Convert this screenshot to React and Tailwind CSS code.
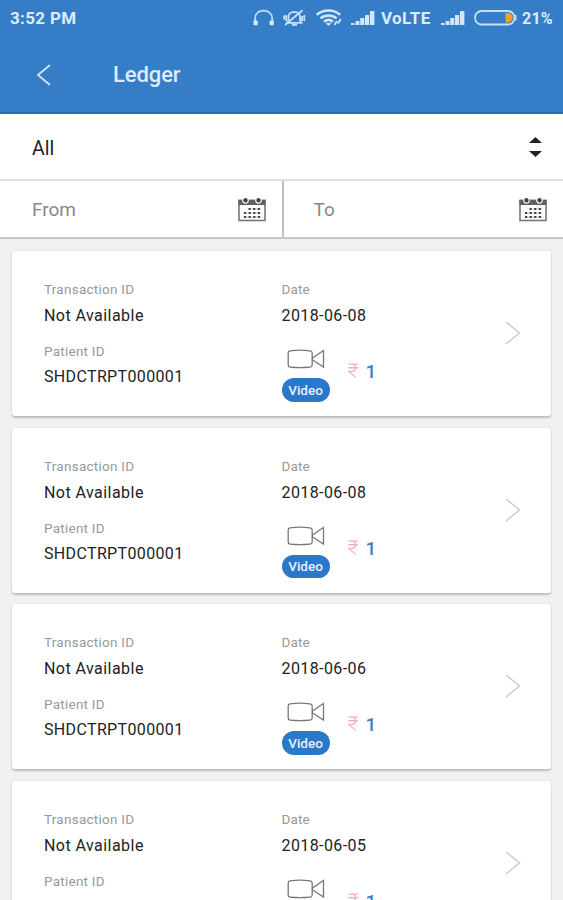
const ledger = [
  { id: 1, date: "2018-06-08" },
  { id: 2, date: "2018-06-08" },
  { id: 3, date: "2018-06-06" },
  { id: 4, date: "2018-06-05" },
];

function SignalIcon({ className }) {
  return (
    <svg className={className} width="24" height="16" viewBox="0 0 24 16" fill="#d3e6fa">
      <rect x="0" y="13" width="3.6" height="2" />
      <rect x="4.6" y="11" width="3.9" height="4" />
      <rect x="9.2" y="8" width="4.1" height="7" />
      <rect x="14" y="5" width="4.2" height="10" />
      <rect x="19" y="1" width="4.4" height="14" />
    </svg>
  );
}

function StatusBar() {
  return (
    <div className="flex h-9 items-center pl-[10px] text-[17px] font-bold text-[#dcecfd]">
      <span className="w-[243px] pt-px tracking-[0.35px]">3:52 PM</span>
      <svg className="shrink-0" width="23" height="18" viewBox="0 0 24 18" fill="none">
        <path d="M2.2 14V9.5C2.2 4.5 6 1.2 11 1.2s9 3.3 9 8.3V14" stroke="#bfdbf7" strokeWidth="1.8" />
        <rect x="0.5" y="11.5" width="4.4" height="5" rx="1" fill="#d8eafc" />
        <rect x="17.3" y="11.5" width="4.4" height="5" rx="1" fill="#d8eafc" />
      </svg>
      <svg className="ml-[7px] shrink-0" width="23" height="18" viewBox="0 0 23 18" fill="none" stroke="#c6dff8" strokeWidth="1.8">
        <path d="M5.5 11.5V7.5C5.5 5 8 3 11.3 3c3.3 0 5.7 2 5.7 4.5v4l1.4 2.3H4.1z" />
        <path d="M2 16L19.5 1.2" />
        <path d="M9 15.8h5" strokeWidth="2" />
        <path d="M1.2 6.5v4M21.3 6v6M19 7v5M3.2 6v6" strokeWidth="1.8" />
      </svg>
      <svg className="ml-[10px] shrink-0" width="27" height="18" viewBox="0 0 27 18" fill="none" stroke="#d0e5fa" strokeWidth="2.5">
        <path d="M0.8 5.8c6.5-5.8 17-5.8 23.4 0" />
        <path d="M4.4 9.4c4.6-4 11.6-4 16.2 0" />
        <path d="M8 12.8c2.7-2.3 6.3-2.3 9 0" />
        <path d="M10 14.2h5l-2.5 2.6z" fill="#d0e5fa" strokeWidth="0.6" />
        <path d="M18.5 16l2.5-4M22 14.5l2.8-4.5" strokeWidth="1.8" />
      </svg>
      <SignalIcon className="ml-[8px] shrink-0" />
      <span className="ml-[6px] w-[53px] whitespace-nowrap pt-px tracking-[0.4px]">VoLTE</span>
      <SignalIcon className="ml-[7px] shrink-0" />
      <svg className="ml-[9px] shrink-0" width="43" height="16" viewBox="0 0 43 16" fill="none">
        <rect x="1" y="1" width="39.5" height="13.5" rx="6.7" stroke="#c6dff8" strokeWidth="1.8" />
        <path d="M31.5 3h2.5a4.7 4.7 0 0 1 0 9.4H31.5z" fill="#f5a01e" />
        <path d="M41.8 5v5.5" stroke="#c6dff8" strokeWidth="1.4" />
      </svg>
      <span className="ml-[5px] pt-px text-[16px] tracking-[0.2px]">21%</span>
    </div>
  );
}

function CalendarIcon() {
  return (
    <svg width="28" height="25" viewBox="0 0 28 25" fill="none">
      <rect x="1" y="3.5" width="26" height="20" stroke="#777" strokeWidth="1.6" />
      <rect x="0.5" y="2.8" width="27" height="5.2" fill="#606060" />
      <circle cx="7.5" cy="3.3" r="2.8" fill="#444" stroke="#fff" strokeWidth="1.1" />
      <circle cx="20.5" cy="3.3" r="2.8" fill="#444" stroke="#fff" strokeWidth="1.1" />
      <path d="M10.5 12h13M5.5 16h18M5.5 20h18" stroke="#bbb" strokeWidth="0.8" />
      <path d="M10.5 12h13" stroke="#444" strokeWidth="2" strokeDasharray="2.2 2.4" />
      <path d="M6 16h18M6 20h18" stroke="#444" strokeWidth="2" strokeDasharray="2.2 2.4" />
    </svg>
  );
}

function LedgerCard({ date }) {
  return (
    <article className="flex h-[165px] shrink-0 rounded-[3px] bg-white pl-8 pt-[28px] shadow-[0_2px_2px_rgba(0,0,0,0.2),0_0_2px_rgba(0,0,0,0.1)]">
      <div className="w-[237.5px]">
        <div className="text-[13.5px] leading-5 tracking-[0.25px] text-[#999]">Transaction ID</div>
        <div className="mt-[7px] text-[16px] leading-5 tracking-[0.45px] text-[#222]">Not Available</div>
        <div className="mt-[15px] text-[13.5px] leading-5 tracking-[0.25px] text-[#999]">Patient ID</div>
        <div className="mt-[6px] text-[16px] leading-5 tracking-[0.35px] text-[#222]">SHDCTRPT000001</div>
      </div>
      <div className="w-[223.5px]">
        <div className="text-[13.5px] leading-5 tracking-[0.1px] text-[#999]">Date</div>
        <div className="mt-[7px] text-[16px] leading-5 tracking-[0.4px] text-[#222]">{date}</div>
        <div className="mt-[23px] flex">
          <div className="flex w-[48px] flex-col items-center">
            <svg width="38" height="20" viewBox="0 0 38 20" fill="none" stroke="#777" strokeWidth="1.3">
              <path d="M3 1.8Q13 0.6 23 1.8Q25 2 25.2 4V16Q25 18 23 18.2Q13 19.2 3 18.2Q1.2 18 1.2 16V4Q1.2 2 3 1.8Z" />
              <path d="M25.5 9L36.5 1.5V18L25.5 11Z" />
            </svg>
            <span className="mt-[9px] flex h-[23.5px] w-[48px] items-center justify-center rounded-full bg-[#2a78c8] text-[13.5px] font-medium text-[#e6f1fd]">Video</span>
          </div>
          <div className="ml-[18px] mt-[13px] flex h-5 items-center">
            <svg className="-mt-[3px]" width="11" height="17" viewBox="0 0 12 17" fill="none" stroke="#f3adcb" strokeWidth="1.4">
              <path d="M0.5 1.5H11M0.5 5.5H11M1 1.5H4C9.5 1.5 9.5 9.5 4 9.5H1L8.5 16" />
            </svg>
            <span className="ml-[7px] text-[19px] font-medium leading-5 text-[#3b7fca]">1</span>
          </div>
        </div>
      </div>
      <svg className="mt-[42px]" width="16" height="24" viewBox="0 0 16 24" fill="none" stroke="#c8c8c8" strokeWidth="1.3">
        <path d="M1 1L14.5 12L1 23" />
      </svg>
    </article>
  );
}

export default function App() {
  return (
    <div className="flex h-[900px] w-[563px] flex-col overflow-hidden bg-[#f0f0f0] font-[Roboto,sans-serif]">
      <header className="h-[114px] shrink-0 border-b-2 border-[#1f70bd] bg-[#367dc8]">
        <StatusBar />
        <div className="flex h-[77px] items-center pl-9">
          <svg width="16" height="24" viewBox="0 0 16 24" fill="none" stroke="#c9e4fc" strokeWidth="1.9">
            <path d="M14 2L2 12L14 22" />
          </svg>
          <h1 className="ml-[61px] text-[22px] font-medium tracking-[-0.1px] text-[#dcecfd]">Ledger</h1>
        </div>
      </header>

      <div className="flex h-[67px] shrink-0 items-center justify-between border-b-2 border-[#dedede] bg-white pl-8 pr-[21px]">
        <span className="pt-1 text-[19.5px] text-[#222]">All</span>
        <svg width="13" height="20" viewBox="0 0 13 20" fill="#222">
          <path d="M6.5 0L13 6H0zM6.5 20L13 14H0z" />
        </svg>
      </div>

      <div className="flex h-[58px] shrink-0 border-b-2 border-[#c8c8c8] bg-white text-[19px] text-[#888]">
        <div className="flex w-[283.5px] items-center justify-between border-r-2 border-[#c0c0c0] pl-8 pr-[16px]">
          <span className="pt-[2px]">From</span>
          <CalendarIcon />
        </div>
        <div className="flex flex-1 items-center justify-between pl-[30px] pr-[16px]">
          <span className="pt-[2px]">To</span>
          <CalendarIcon />
        </div>
      </div>

      <main className="flex flex-col gap-[11.5px] px-3 pt-3">
        {ledger.map((entry) => (
          <LedgerCard key={entry.id} date={entry.date} />
        ))}
      </main>
    </div>
  );
}
